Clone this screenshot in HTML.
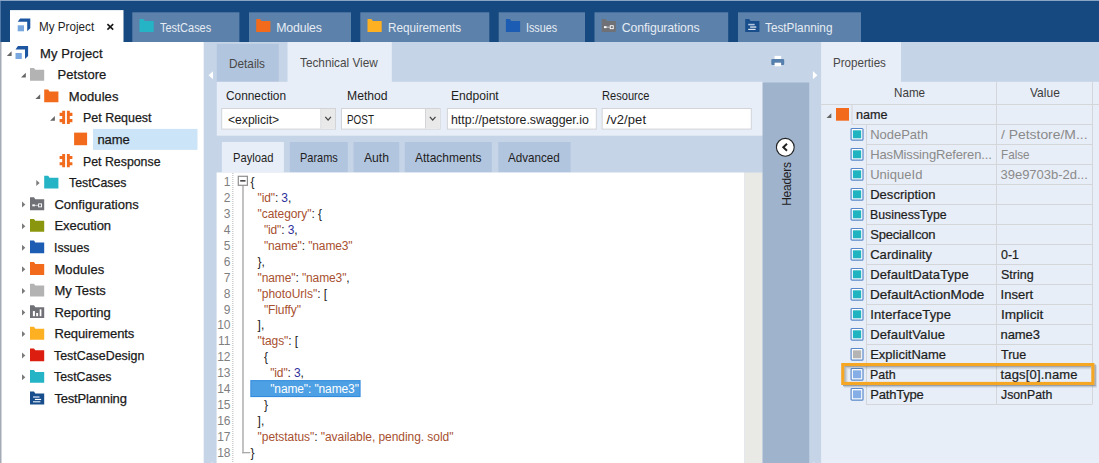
<!DOCTYPE html><html><head><meta charset="utf-8"><title>My Project</title><style>
*{box-sizing:border-box;margin:0;padding:0}
html,body{width:1099px;height:463px;overflow:hidden;background:#fff}
body{font-family:"Liberation Sans",sans-serif;font-size:13px;color:#1e1e1e;position:relative}
svg.layer{position:absolute;left:0;top:0;width:1099px;height:463px}
.t{position:absolute;white-space:nowrap;line-height:16px;height:16px;transform-origin:0 0}
.ln{text-align:right;color:#7f7f7f;width:20.5px}
.k{color:#a8502f}.n{color:#2d2f9c}.p{color:#222}
.sb{-webkit-text-stroke:0.22px #1a1a1a}
.tr{-webkit-text-stroke:0.25px #1a1a1a}
</style></head><body>
<svg class="layer" viewBox="0 0 1099 463"><rect x="0" y="0" width="1099" height="42" fill="#15497f"/>
<rect x="0" y="0" width="0.8" height="42" fill="#5f86b3"/>
<rect x="0" y="0" width="1099" height="1" fill="#8aa4c6"/>
<rect x="10" y="10.1" width="113.5" height="31.9" fill="#fff"/>
<rect x="132.3" y="12.3" width="107.1" height="29.7" fill="#5c81aa"/>
<rect x="249" y="12.3" width="102" height="29.7" fill="#5c81aa"/>
<rect x="360.3" y="12.3" width="129" height="29.7" fill="#5c81aa"/>
<rect x="498.7" y="12.3" width="86.3" height="29.7" fill="#5c81aa"/>
<rect x="594.5" y="12.3" width="133.7" height="29.7" fill="#5c81aa"/>
<rect x="738" y="12.3" width="123" height="29.7" fill="#5c81aa"/>
<rect x="0" y="42" width="1.5" height="421" fill="#a4abb6"/>
<rect x="93" y="128.9" width="104.5" height="21" fill="#cce4f7"/>
<rect x="74.1" y="132.61999999999998" width="13" height="12.6" fill="#f26b1d"/>
<rect x="203.7" y="42" width="895.6" height="421" fill="#c5d4e7"/>
<rect x="216.8" y="43.9" width="62" height="38" fill="#b2c5de"/>
<rect x="287.5" y="42" width="104.3" height="40" fill="#e8eef7"/>
<rect x="216.8" y="81.8" width="545.8" height="53.9" fill="#e8eef7"/>
<rect x="221.2" y="108" width="114.8" height="21.6" fill="#d2d4d8"/>
<rect x="222.2" y="109" width="112.8" height="19.6" fill="#fff"/>
<rect x="321.4" y="109" width="13.6" height="19.6" fill="#e9e9e9"/>
<rect x="320.4" y="109" width="1" height="19.6" fill="#d2d4d8"/>
<rect x="341" y="108" width="99.6" height="21.6" fill="#d2d4d8"/>
<rect x="342" y="109" width="97.6" height="19.6" fill="#fff"/>
<rect x="426.0" y="109" width="13.6" height="19.6" fill="#e9e9e9"/>
<rect x="425.0" y="109" width="1" height="19.6" fill="#d2d4d8"/>
<rect x="446.9" y="108" width="149.9" height="21.6" fill="#d2d4d8"/>
<rect x="447.9" y="109" width="147.9" height="19.6" fill="#fff"/>
<rect x="601.7" y="108" width="150.1" height="21.6" fill="#d2d4d8"/>
<rect x="602.7" y="109" width="148.1" height="19.6" fill="#fff"/>
<rect x="221.9" y="142" width="62" height="30.5" fill="#e8eef7"/>
<rect x="289.9" y="142" width="57.9" height="30.5" fill="#b2c5de"/>
<rect x="353.6" y="142" width="45.6" height="30.5" fill="#b2c5de"/>
<rect x="404.8" y="142" width="87" height="30.5" fill="#b2c5de"/>
<rect x="498.3" y="142" width="72.3" height="30.5" fill="#b2c5de"/>
<rect x="216.6" y="172.5" width="527.8" height="291" fill="#fff"/>
<rect x="744.4" y="172.5" width="18.2" height="291" fill="#e9e9e6"/>
<line x1="232.8" y1="173" x2="232.8" y2="463" stroke="#c6c6c6" stroke-width="1.3" stroke-dasharray="1 1"/>
<rect x="242.3" y="185.5" width="1.4" height="267.8" fill="#a9a9a9"/>
<rect x="242.3" y="452" width="8" height="1.3" fill="#a9a9a9"/>
<rect x="250.3" y="380.1" width="110.3" height="17" fill="#2f89dc"/>
<rect x="251.3" y="381.1" width="108.3" height="15" fill="#4da0e3"/>
<rect x="762.6" y="82.5" width="46.6" height="381" fill="#a0b3cc"/>
<rect x="821.1" y="42" width="79.9" height="40" fill="#e8eef7"/>
<rect x="821.1" y="81.8" width="278" height="382" fill="#e8eef7"/>
<rect x="996" y="82" width="1" height="322.5" fill="#d4d6d9"/>
<rect x="1092" y="82" width="1" height="322.5" fill="#d4d6d9"/>
<rect x="821.1" y="104" width="278" height="1" fill="#d4d6d9"/>
<rect x="851.5" y="104" width="1" height="20" fill="#d4d6d9"/>
<rect x="866" y="124" width="1" height="280.5" fill="#d4d6d9"/>
<rect x="851.5" y="124" width="240.5" height="1" fill="#d4d6d9"/>
<rect x="866" y="144" width="226" height="1" fill="#d4d6d9"/>
<rect x="866" y="164" width="226" height="1" fill="#d4d6d9"/>
<rect x="866" y="184" width="226" height="1" fill="#d4d6d9"/>
<rect x="866" y="204" width="226" height="1" fill="#d4d6d9"/>
<rect x="866" y="224" width="226" height="1" fill="#d4d6d9"/>
<rect x="866" y="244" width="226" height="1" fill="#d4d6d9"/>
<rect x="866" y="264" width="226" height="1" fill="#d4d6d9"/>
<rect x="866" y="284" width="226" height="1" fill="#d4d6d9"/>
<rect x="866" y="304" width="226" height="1" fill="#d4d6d9"/>
<rect x="866" y="324" width="226" height="1" fill="#d4d6d9"/>
<rect x="866" y="344" width="226" height="1" fill="#d4d6d9"/>
<rect x="866" y="364" width="226" height="1" fill="#d4d6d9"/>
<rect x="866" y="384" width="226" height="1" fill="#d4d6d9"/>
<rect x="866" y="404" width="226" height="1" fill="#d4d6d9"/>
<rect x="836" y="108" width="13" height="12.7" fill="#f26b1d"/></svg>
<span class="t" style="left:38.5px;top:19px;font-size:12.6px;transform:scaleX(0.9276);color:#1e1e1e">My Project</span>
<span class="t" style="left:159.5px;top:20px;font-size:12.3px;transform:scaleX(0.8917);color:#e6ecf4">TestCases</span>
<span class="t" style="left:276.2px;top:20px;font-size:12.3px;letter-spacing:-0.115px;color:#e6ecf4">Modules</span>
<span class="t" style="left:387.5px;top:20px;font-size:12.3px;transform:scaleX(0.9548);color:#e6ecf4">Requirements</span>
<span class="t" style="left:525.9px;top:20px;font-size:12.3px;transform:scaleX(0.8749);color:#e6ecf4">Issues</span>
<span class="t" style="left:621.7px;top:20px;font-size:12.3px;letter-spacing:-0.101px;color:#e6ecf4">Configurations</span>
<span class="t" style="left:765.2px;top:20px;font-size:12.3px;transform:scaleX(0.9584);color:#e6ecf4">TestPlanning</span>
<span class="t tr" style="left:40px;top:45.7px;font-size:13px;letter-spacing:0.122px;color:#1a1a1a">My Project</span>
<span class="t tr" style="left:57.5px;top:67.28px;font-size:13px;letter-spacing:0.056px;color:#1a1a1a">Petstore</span>
<span class="t tr" style="left:68.8px;top:88.86px;font-size:13px;letter-spacing:0.078px;color:#1a1a1a">Modules</span>
<span class="t tr" style="left:83.2px;top:110.44px;font-size:13px;transform:scaleX(0.9575);color:#1a1a1a">Pet Request</span>
<span class="t tr" style="left:97.5px;top:132.02px;font-size:13px;letter-spacing:-0.105px;color:#1a1a1a">name</span>
<span class="t tr" style="left:83.2px;top:153.6px;font-size:13px;transform:scaleX(0.9491);color:#1a1a1a">Pet Response</span>
<span class="t tr" style="left:68.8px;top:175.18px;font-size:13px;transform:scaleX(0.9475);color:#1a1a1a">TestCases</span>
<span class="t tr" style="left:54.4px;top:196.76px;font-size:13px;letter-spacing:0.044px;color:#1a1a1a">Configurations</span>
<span class="t tr" style="left:54.4px;top:218.34px;font-size:13px;letter-spacing:-0.049px;color:#1a1a1a">Execution</span>
<span class="t tr" style="left:54.2px;top:239.92px;font-size:13px;transform:scaleX(0.9396);color:#1a1a1a">Issues</span>
<span class="t tr" style="left:54.4px;top:261.5px;font-size:13px;letter-spacing:0.128px;color:#1a1a1a">Modules</span>
<span class="t tr" style="left:54.4px;top:283.08px;font-size:13px;letter-spacing:0.051px;color:#1a1a1a">My Tests</span>
<span class="t tr" style="left:54.4px;top:304.66px;font-size:13px;letter-spacing:0.005px;color:#1a1a1a">Reporting</span>
<span class="t tr" style="left:54.4px;top:326.24px;font-size:13px;letter-spacing:-0.093px;color:#1a1a1a">Requirements</span>
<span class="t tr" style="left:54.4px;top:347.82px;font-size:13px;transform:scaleX(0.9540);color:#1a1a1a">TestCaseDesign</span>
<span class="t tr" style="left:54.4px;top:369.4px;font-size:13px;transform:scaleX(0.9475);color:#1a1a1a">TestCases</span>
<span class="t tr" style="left:54.4px;top:390.98px;font-size:13px;letter-spacing:-0.176px;color:#1a1a1a">TestPlanning</span>
<span class="t" style="left:228.7px;top:56px;font-size:13px;transform:scaleX(0.9060);color:#484848">Details</span>
<span class="t" style="left:299.8px;top:55px;font-size:13px;transform:scaleX(0.9062);color:#484848">Technical View</span>
<span class="t" style="left:226.3px;top:88px;font-size:13px;transform:scaleX(0.9124);">Connection</span>
<span class="t" style="left:346.9px;top:88px;font-size:13px;transform:scaleX(0.9364);">Method</span>
<span class="t" style="left:451.2px;top:88px;font-size:13px;transform:scaleX(0.9295);">Endpoint</span>
<span class="t" style="left:602.3px;top:88px;font-size:13px;transform:scaleX(0.8538);">Resource</span>
<span class="t" style="left:227.6px;top:112px;font-size:13px;transform:scaleX(0.9322);">&lt;explicit&gt;</span>
<span class="t" style="left:346.9px;top:112px;font-size:13px;transform:scaleX(0.7628);">POST</span>
<span class="t" style="left:451.2px;top:112px;font-size:13px;transform:scaleX(0.9488);">http://petstore.swagger.io</span>
<span class="t" style="left:606.6px;top:112px;font-size:13px;letter-spacing:0.063px;">/v2/pet</span>
<span class="t" style="left:232.7px;top:149.5px;font-size:13px;transform:scaleX(0.8600);">Payload</span>
<span class="t" style="left:299.6px;top:149.5px;font-size:13px;transform:scaleX(0.8440);">Params</span>
<span class="t" style="left:363.8px;top:149.5px;font-size:13px;transform:scaleX(0.9349);">Auth</span>
<span class="t" style="left:415.1px;top:149.5px;font-size:13px;transform:scaleX(0.9204);">Attachments</span>
<span class="t" style="left:508px;top:149.5px;font-size:13px;transform:scaleX(0.8959);">Advanced</span>
<span class="t ln" style="left:210px;top:174.0px;font-size:12px;">1</span>
<span class="t" style="left:250.4px;top:174.0px;font-size:12px;"><span class="p">{</span></span>
<span class="t ln" style="left:210px;top:189.94px;font-size:12px;">2</span>
<span class="t" style="left:257.6px;top:189.94px;font-size:12px;letter-spacing:-0.133px;"><span class="k">"id"</span><span class="p">: </span><span class="n">3</span><span class="p">,</span></span>
<span class="t ln" style="left:210px;top:205.88px;font-size:12px;">3</span>
<span class="t" style="left:257.6px;top:205.88px;font-size:12px;letter-spacing:-0.077px;"><span class="k">"category"</span><span class="p">: {</span></span>
<span class="t ln" style="left:210px;top:221.82px;font-size:12px;">4</span>
<span class="t" style="left:263.9px;top:221.82px;font-size:12px;letter-spacing:-0.133px;"><span class="k">"id"</span><span class="p">: </span><span class="n">3</span><span class="p">,</span></span>
<span class="t ln" style="left:210px;top:237.76px;font-size:12px;">5</span>
<span class="t" style="left:263.9px;top:237.76px;font-size:12px;letter-spacing:-0.122px;"><span class="k">"name"</span><span class="p">: </span><span class="k">"name3"</span></span>
<span class="t ln" style="left:210px;top:253.7px;font-size:12px;">6</span>
<span class="t" style="left:257.6px;top:253.7px;font-size:12px;"><span class="p">},</span></span>
<span class="t ln" style="left:210px;top:269.64px;font-size:12px;">7</span>
<span class="t" style="left:257.6px;top:269.64px;font-size:12px;letter-spacing:-0.116px;"><span class="k">"name"</span><span class="p">: </span><span class="k">"name3"</span><span class="p">,</span></span>
<span class="t ln" style="left:210px;top:285.58px;font-size:12px;">8</span>
<span class="t" style="left:257.6px;top:285.58px;font-size:12px;letter-spacing:-0.029px;"><span class="k">"photoUrls"</span><span class="p">: [</span></span>
<span class="t ln" style="left:210px;top:301.52px;font-size:12px;">9</span>
<span class="t" style="left:263.9px;top:301.52px;font-size:12px;letter-spacing:-0.091px;"><span class="k">"Fluffy"</span></span>
<span class="t ln" style="left:210px;top:317.46px;font-size:12px;">10</span>
<span class="t" style="left:257.6px;top:317.46px;font-size:12px;"><span class="p">],</span></span>
<span class="t ln" style="left:210px;top:333.4px;font-size:12px;">11</span>
<span class="t" style="left:257.6px;top:333.4px;font-size:12px;letter-spacing:-0.088px;"><span class="k">"tags"</span><span class="p">: [</span></span>
<span class="t ln" style="left:210px;top:349.34px;font-size:12px;">12</span>
<span class="t" style="left:263.9px;top:349.34px;font-size:12px;"><span class="p">{</span></span>
<span class="t ln" style="left:210px;top:365.28px;font-size:12px;">13</span>
<span class="t" style="left:270.2px;top:365.28px;font-size:12px;letter-spacing:-0.133px;"><span class="k">"id"</span><span class="p">: </span><span class="n">3</span><span class="p">,</span></span>
<span class="t ln" style="left:210px;top:381.22px;font-size:12px;">14</span>
<span class="t" style="left:270.2px;top:381.22px;font-size:12px;letter-spacing:-0.122px;"><span style="color:#fff">"name": "name3"</span></span>
<span class="t ln" style="left:210px;top:397.16px;font-size:12px;">15</span>
<span class="t" style="left:263.9px;top:397.16px;font-size:12px;"><span class="p">}</span></span>
<span class="t ln" style="left:210px;top:413.1px;font-size:12px;">16</span>
<span class="t" style="left:257.6px;top:413.1px;font-size:12px;"><span class="p">],</span></span>
<span class="t ln" style="left:210px;top:429.04px;font-size:12px;">17</span>
<span class="t" style="left:257.6px;top:429.04px;font-size:12px;letter-spacing:-0.053px;"><span class="k">"petstatus"</span><span class="p">: </span><span class="k">"available, pending. sold"</span></span>
<span class="t ln" style="left:210px;top:444.98px;font-size:12px;">18</span>
<span class="t" style="left:250.4px;top:444.98px;font-size:12px;"><span class="p">}</span></span>
<div style="position:absolute;left:786.5px;top:184.3px;width:0;height:0"><span class="t" style="left:-30px;top:-8px;width:60px;text-align:center;font-size:12px;letter-spacing:-0.25px;transform:rotate(-90deg);transform-origin:50% 50%;color:#1e1e1e">Headers</span></div>
<span class="t" style="left:833.4px;top:55px;font-size:13px;transform:scaleX(0.8929);color:#484848">Properties</span>
<span class="t" style="left:893.5px;top:85px;font-size:13px;transform:scaleX(0.8969);color:#3c3c3c">Name</span>
<span class="t" style="left:1029.6px;top:85px;font-size:13px;transform:scaleX(0.9231);color:#3c3c3c">Value</span>
<span class="t sb" style="left:855.7px;top:107px;font-size:13px;transform:scaleX(0.9687);">name</span>
<span class="t" style="left:870.2px;top:127.2px;font-size:13px;letter-spacing:-0.017px;color:#8a8a8a">NodePath</span>
<span class="t" style="left:1000.5px;top:127.2px;font-size:13px;transform:scaleX(1.0691);color:#8a8a8a">/ Petstore/M...</span>
<span class="t" style="left:870.2px;top:147.2px;font-size:13px;letter-spacing:-0.140px;color:#8a8a8a">HasMissingReferen...</span>
<span class="t" style="left:1000.5px;top:147.2px;font-size:13px;transform:scaleX(0.8997);color:#8a8a8a">False</span>
<span class="t" style="left:870.2px;top:167.2px;font-size:13px;letter-spacing:0.024px;color:#8a8a8a">UniqueId</span>
<span class="t" style="left:1000.5px;top:167.2px;font-size:13px;letter-spacing:-0.012px;color:#8a8a8a">39e9703b-2d...</span>
<span class="t sb" style="left:870.2px;top:187.2px;font-size:13px;letter-spacing:0.028px;">Description</span>
<span class="t sb" style="left:870.2px;top:207.2px;font-size:13px;transform:scaleX(0.9477);">BusinessType</span>
<span class="t sb" style="left:870.2px;top:227.2px;font-size:13px;letter-spacing:-0.191px;">SpecialIcon</span>
<span class="t sb" style="left:870.2px;top:247.2px;font-size:13px;letter-spacing:0.039px;">Cardinality</span>
<span class="t sb" style="left:1000.5px;top:247.2px;font-size:13px;transform:scaleX(0.9581);">0-1</span>
<span class="t sb" style="left:870.2px;top:267.2px;font-size:13px;letter-spacing:0.119px;">DefaultDataType</span>
<span class="t sb" style="left:1000.5px;top:267.2px;font-size:13px;transform:scaleX(0.9629);">String</span>
<span class="t sb" style="left:870.2px;top:287.2px;font-size:13px;transform:scaleX(1.0407);">DefaultActionMode</span>
<span class="t sb" style="left:1000.5px;top:287.2px;font-size:13px;letter-spacing:0.038px;">Insert</span>
<span class="t sb" style="left:870.2px;top:307.2px;font-size:13px;letter-spacing:0.170px;">InterfaceType</span>
<span class="t sb" style="left:1000.5px;top:307.2px;font-size:13px;transform:scaleX(1.0434);">Implicit</span>
<span class="t sb" style="left:870.2px;top:327.2px;font-size:13px;letter-spacing:0.121px;">DefaultValue</span>
<span class="t sb" style="left:1000.5px;top:327.2px;font-size:13px;letter-spacing:-0.061px;">name3</span>
<span class="t sb" style="left:870.2px;top:347.2px;font-size:13px;letter-spacing:0.004px;">ExplicitName</span>
<span class="t sb" style="left:1000.5px;top:347.2px;font-size:13px;transform:scaleX(0.9640);">True</span>
<span class="t sb" style="left:870.2px;top:367.2px;font-size:13px;transform:scaleX(0.9573);">Path</span>
<span class="t sb" style="left:1000.5px;top:367.2px;font-size:13px;letter-spacing:0.168px;">tags[0].name</span>
<span class="t sb" style="left:870.2px;top:387.2px;font-size:13px;letter-spacing:-0.189px;">PathType</span>
<span class="t sb" style="left:1000.5px;top:387.2px;font-size:13px;transform:scaleX(0.9447);">JsonPath</span>
<svg class="layer" viewBox="0 0 1099 463"><g transform="translate(17.7 18.4)"><path d="M0 3.4L2.4 0H12.6V9.9L9.5 12.9V3.4Z" fill="#1d56a0"/><rect x="0" y="6.9" width="6.3" height="6" fill="#79a8e0"/></g>
<g transform="translate(106.8 23.8)"><path d="M0.6 0.3L6.4 5.9M6.4 0.3L0.6 5.9" stroke="#1a1a1a" stroke-width="1.6" fill="none"/></g>
<g transform="translate(139.5 19.1)"><g transform="scale(1 1.0238)"><path d="M0 0H4L5.3 1.9H14.2V12.6H0Z" fill="#25b4c6"/></g></g>
<g transform="translate(256.2 19.1)"><g transform="scale(1 1.0238)"><path d="M0 0H4L5.3 1.9H14.2V12.6H0Z" fill="#f26b1d"/></g></g>
<g transform="translate(367.5 19.1)"><g transform="scale(1 1.0238)"><path d="M0 0H4L5.3 1.9H14.2V12.6H0Z" fill="#fdb022"/></g></g>
<g transform="translate(505.9 19.1)"><g transform="scale(1 1.0238)"><path d="M0 0H4L5.3 1.9H14.2V12.6H0Z" fill="#1c5db3"/></g></g>
<g transform="translate(601.7 19.1)"><g transform="scale(1 1.0238)"><path d="M0 0H4L5.3 1.9H14.2V12.6H0Z" fill="#707176"/><rect x="2.3" y="6.9" width="2.6" height="1.9" fill="#fff"/><rect x="4.9" y="7.4" width="3.3" height="0.9" fill="#cfcfd2"/><rect x="8.55" y="6.45" width="3" height="2.9" fill="none" stroke="#fff" stroke-width="0.9"/></g></g>
<g transform="translate(745.2 19.1)"><g transform="scale(1 1.0238)"><path d="M0 0H4L5.3 1.9H14.2V12.6H0Z" fill="#184e8c"/><rect x="3" y="4.6" width="6.5" height="1.5" fill="#b4c8e4"/><rect x="4.9" y="7.2" width="6.2" height="1.1" fill="#fff"/><rect x="3" y="9.5" width="7.4" height="1.1" fill="#e6edf6"/></g></g>
<g transform="translate(6.8 51.2)"><path d="M4.8 0V4.7H0Z" fill="#666"/></g>
<g transform="translate(15.5 46.1)"><path d="M0 3.4L2.4 0H12.6V9.9L9.5 12.9V3.4Z" fill="#1d56a0"/><rect x="0" y="6.9" width="6.3" height="6" fill="#79a8e0"/></g>
<g transform="translate(21 72.78)"><path d="M4.8 0V4.7H0Z" fill="#666"/></g>
<g transform="translate(30 67.88)"><g transform="scale(1 1.0159)"><path d="M0 0H4L5.3 1.9H14.2V12.6H0Z" fill="#b3b3b3"/></g></g>
<g transform="translate(35.4 94.36)"><path d="M4.8 0V4.7H0Z" fill="#666"/></g>
<g transform="translate(44.2 89.46)"><g transform="scale(1 1.0159)"><path d="M0 0H4L5.3 1.9H14.2V12.6H0Z" fill="#f26b1d"/></g></g>
<g transform="translate(50.1 115.94)"><path d="M4.8 0V4.7H0Z" fill="#666"/></g>
<g transform="translate(59.5 110.83999999999999)"><path d="M2.7 0H5.6V13.2H2.7V11.3H0.1V8.2H2.7V5.1H0.1V1.9H2.7Z" fill="#f26b1d"/><path d="M10.3 0H7.4V13.2H10.3V11.3H12.9V8.2H10.3V5.1H12.9V1.9H10.3Z" fill="#f26b1d"/></g>
<g transform="translate(59.5 154.0)"><path d="M2.7 0H5.6V13.2H2.7V11.3H0.1V8.2H2.7V5.1H0.1V1.9H2.7Z" fill="#f26b1d"/><path d="M10.3 0H7.4V13.2H10.3V11.3H12.9V8.2H10.3V5.1H12.9V1.9H10.3Z" fill="#f26b1d"/></g>
<g transform="translate(36.3 179.98000000000002)"><path d="M0 0L3.3 3L0 6Z" fill="#7a7a7a"/></g>
<g transform="translate(44.2 175.78)"><g transform="scale(1 1.0159)"><path d="M0 0H4L5.3 1.9H14.2V12.6H0Z" fill="#25b4c6"/></g></g>
<g transform="translate(22 201.56)"><path d="M0 0L3.3 3L0 6Z" fill="#7a7a7a"/></g>
<g transform="translate(30 197.35999999999999)"><g transform="scale(1 1.0159)"><path d="M0 0H4L5.3 1.9H14.2V12.6H0Z" fill="#707176"/><rect x="2.3" y="6.9" width="2.6" height="1.9" fill="#fff"/><rect x="4.9" y="7.4" width="3.3" height="0.9" fill="#cfcfd2"/><rect x="8.55" y="6.45" width="3" height="2.9" fill="none" stroke="#fff" stroke-width="0.9"/></g></g>
<g transform="translate(22 223.14)"><path d="M0 0L3.3 3L0 6Z" fill="#7a7a7a"/></g>
<g transform="translate(30 218.93999999999997)"><g transform="scale(1 1.0159)"><path d="M0 0H4L5.3 1.9H14.2V12.6H0Z" fill="#8a970e"/></g></g>
<g transform="translate(22 244.71999999999997)"><path d="M0 0L3.3 3L0 6Z" fill="#7a7a7a"/></g>
<g transform="translate(30 240.51999999999995)"><g transform="scale(1 1.0159)"><path d="M0 0H4L5.3 1.9H14.2V12.6H0Z" fill="#1c5db3"/></g></g>
<g transform="translate(22 266.3)"><path d="M0 0L3.3 3L0 6Z" fill="#7a7a7a"/></g>
<g transform="translate(30 262.1)"><g transform="scale(1 1.0159)"><path d="M0 0H4L5.3 1.9H14.2V12.6H0Z" fill="#f26b1d"/></g></g>
<g transform="translate(22 287.88)"><path d="M0 0L3.3 3L0 6Z" fill="#7a7a7a"/></g>
<g transform="translate(30 283.68)"><g transform="scale(1 1.0159)"><path d="M0 0H4L5.3 1.9H14.2V12.6H0Z" fill="#b3b3b3"/></g></g>
<g transform="translate(22 309.46)"><path d="M0 0L3.3 3L0 6Z" fill="#7a7a7a"/></g>
<g transform="translate(30 305.26)"><g transform="scale(1 1.0159)"><path d="M0 0H4L5.3 1.9H14.2V12.6H0Z" fill="#707176"/><rect x="2.9" y="5.7" width="2" height="5.1" fill="#fff"/><rect x="6.2" y="7.6" width="1.9" height="3.2" fill="#fff"/><rect x="9.7" y="4" width="1.7" height="6.8" fill="#fff"/></g></g>
<g transform="translate(22 331.03999999999996)"><path d="M0 0L3.3 3L0 6Z" fill="#7a7a7a"/></g>
<g transform="translate(30 326.84)"><g transform="scale(1 1.0159)"><path d="M0 0H4L5.3 1.9H14.2V12.6H0Z" fill="#fdb022"/></g></g>
<g transform="translate(22 352.62)"><path d="M0 0L3.3 3L0 6Z" fill="#7a7a7a"/></g>
<g transform="translate(30 348.42)"><g transform="scale(1 1.0159)"><path d="M0 0H4L5.3 1.9H14.2V12.6H0Z" fill="#dc1e10"/></g></g>
<g transform="translate(22 374.2)"><path d="M0 0L3.3 3L0 6Z" fill="#7a7a7a"/></g>
<g transform="translate(30 370.0)"><g transform="scale(1 1.0159)"><path d="M0 0H4L5.3 1.9H14.2V12.6H0Z" fill="#25b4c6"/></g></g>
<g transform="translate(30 391.58)"><g transform="scale(1 1.0159)"><path d="M0 0H4L5.3 1.9H14.2V12.6H0Z" fill="#184e8c"/><rect x="3" y="4.6" width="6.5" height="1.5" fill="#b4c8e4"/><rect x="4.9" y="7.2" width="6.2" height="1.1" fill="#fff"/><rect x="3" y="9.5" width="7.4" height="1.1" fill="#e6edf6"/></g></g>
<g transform="translate(208.5 71.3)"><path d="M4.5 0V8L0 4Z" fill="#fff"/></g>
<g transform="translate(208.5 461)"><path d="M4.5 0V8L0 4Z" fill="#d5dfee"/></g>
<g transform="translate(324.79999999999995 116.3)"><path d="M0.5 0.5L3.3 3.8L6.1 0.5" fill="none" stroke="#444" stroke-width="1.3"/></g>
<g transform="translate(429.4 116.3)"><path d="M0.5 0.5L3.3 3.8L6.1 0.5" fill="none" stroke="#444" stroke-width="1.3"/></g>
<g transform="translate(237.7 175.7)"><rect x="0.6" y="0.6" width="9.1" height="9" fill="#fff" stroke="#8e8e8e" stroke-width="1.2"/><rect x="2.5" y="4.4" width="5.3" height="1.5" fill="#3a3a3a"/></g>
<g transform="translate(775.3 137.3)"><circle cx="10" cy="10" r="8.9" fill="#fff" stroke="#222" stroke-width="1.1"/><path d="M11.7 6.5L8 10L11.7 13.5" fill="none" stroke="#222" stroke-width="2"/></g>
<g transform="translate(771.3 55.9)"><rect x="3.3" y="0" width="6.5" height="3.4" fill="#fff"/><rect x="0" y="3.1" width="12.9" height="5.9" rx="0.9" fill="#5580ad"/><rect x="3.3" y="6.8" width="6.5" height="3.6" fill="#fff"/></g>
<g transform="translate(812.9 71)"><path d="M0 0V8.3L4.5 4.15Z" fill="#fff"/></g>
<g transform="translate(812.9 461)"><path d="M0 0V8.3L4.5 4.15Z" fill="#d5dfee"/></g>
<g transform="translate(826.5 113.2)"><path d="M4.8 0V4.7H0Z" fill="#666"/></g>
<g transform="translate(850.5 127.9)"><rect x="0.6" y="0.6" width="11.9" height="11.7" rx="1" fill="#fff" stroke="#5787c8" stroke-width="1.2"/><rect x="2.4" y="2.4" width="8.3" height="8" fill="#21b3bf"/></g>
<g transform="translate(850.5 147.9)"><rect x="0.6" y="0.6" width="11.9" height="11.7" rx="1" fill="#fff" stroke="#5787c8" stroke-width="1.2"/><rect x="2.4" y="2.4" width="8.3" height="8" fill="#21b3bf"/></g>
<g transform="translate(850.5 167.9)"><rect x="0.6" y="0.6" width="11.9" height="11.7" rx="1" fill="#fff" stroke="#5787c8" stroke-width="1.2"/><rect x="2.4" y="2.4" width="8.3" height="8" fill="#21b3bf"/></g>
<g transform="translate(850.5 187.9)"><rect x="0.6" y="0.6" width="11.9" height="11.7" rx="1" fill="#fff" stroke="#5787c8" stroke-width="1.2"/><rect x="2.4" y="2.4" width="8.3" height="8" fill="#21b3bf"/></g>
<g transform="translate(850.5 207.9)"><rect x="0.6" y="0.6" width="11.9" height="11.7" rx="1" fill="#fff" stroke="#5787c8" stroke-width="1.2"/><rect x="2.4" y="2.4" width="8.3" height="8" fill="#21b3bf"/></g>
<g transform="translate(850.5 227.9)"><rect x="0.6" y="0.6" width="11.9" height="11.7" rx="1" fill="#fff" stroke="#5787c8" stroke-width="1.2"/><rect x="2.4" y="2.4" width="8.3" height="8" fill="#21b3bf"/></g>
<g transform="translate(850.5 247.9)"><rect x="0.6" y="0.6" width="11.9" height="11.7" rx="1" fill="#fff" stroke="#5787c8" stroke-width="1.2"/><rect x="2.4" y="2.4" width="8.3" height="8" fill="#21b3bf"/></g>
<g transform="translate(850.5 267.9)"><rect x="0.6" y="0.6" width="11.9" height="11.7" rx="1" fill="#fff" stroke="#5787c8" stroke-width="1.2"/><rect x="2.4" y="2.4" width="8.3" height="8" fill="#21b3bf"/></g>
<g transform="translate(850.5 287.9)"><rect x="0.6" y="0.6" width="11.9" height="11.7" rx="1" fill="#fff" stroke="#5787c8" stroke-width="1.2"/><rect x="2.4" y="2.4" width="8.3" height="8" fill="#21b3bf"/></g>
<g transform="translate(850.5 307.9)"><rect x="0.6" y="0.6" width="11.9" height="11.7" rx="1" fill="#fff" stroke="#5787c8" stroke-width="1.2"/><rect x="2.4" y="2.4" width="8.3" height="8" fill="#21b3bf"/></g>
<g transform="translate(850.5 327.9)"><rect x="0.6" y="0.6" width="11.9" height="11.7" rx="1" fill="#fff" stroke="#5787c8" stroke-width="1.2"/><rect x="2.4" y="2.4" width="8.3" height="8" fill="#21b3bf"/></g>
<g transform="translate(850.5 347.9)"><rect x="0.6" y="0.6" width="11.9" height="11.7" rx="1" fill="#fff" stroke="#5787c8" stroke-width="1.2"/><rect x="2.4" y="2.4" width="8.3" height="8" fill="#b4b4b4"/></g>
<g transform="translate(850.5 367.9)"><rect x="0.6" y="0.6" width="11.9" height="11.7" rx="1" fill="#fff" stroke="#5787c8" stroke-width="1.2"/><rect x="2.4" y="2.4" width="8.3" height="8" fill="#86aee6"/></g>
<g transform="translate(850.5 387.9)"><rect x="0.6" y="0.6" width="11.9" height="11.7" rx="1" fill="#fff" stroke="#5787c8" stroke-width="1.2"/><rect x="2.4" y="2.4" width="8.3" height="8" fill="#86aee6"/></g>
<path d="M1091.4 366.7H844.9V382" fill="none" stroke="#46505f" stroke-opacity="0.45" stroke-width="1.2"/><path d="M1091.4 367.9H846.1V382" fill="none" stroke="#46505f" stroke-opacity="0.2" stroke-width="1.2"/><path d="M1091.4 369H847.2V382" fill="none" stroke="#46505f" stroke-opacity="0.08" stroke-width="1.2"/><path d="M843 385.6H1095V364.6" fill="none" stroke="#46505f" stroke-opacity="0.5" stroke-width="1.3"/><path d="M844 386.8H1096.2V365.6" fill="none" stroke="#46505f" stroke-opacity="0.18" stroke-width="1.2"/><rect x="842.75" y="364.55" width="250.1" height="18.9" fill="none" stroke="#f5a623" stroke-width="3.1"/></svg>
</body></html>
